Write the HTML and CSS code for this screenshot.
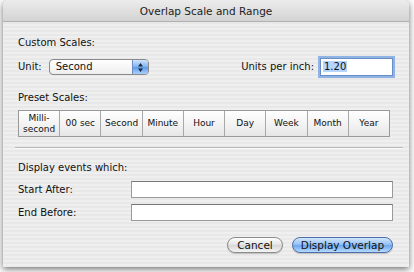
FILE: index.html
```html
<!DOCTYPE html>
<html>
<head>
	<title>Overlap Scale and Range</title>
	<link rel="stylesheet" href="styles.css">
</head>
<body>
	<div class="backdrop">
		<div class="sheet">
			<div class="titlebar">Overlap Scale and Range</div>
			<div class="content">
				<div class="label section">Custom Scales:</div>
				<div class="unit-row">
					<span class="label">Unit:</span>
					<div class="popup">
						<span class="popup-text">Second</span>
						<span class="popup-arrows">
							<svg width="7" height="11" viewBox="0 0 7 11"><path d="M3.5 1 L6 4.5 L1 4.5 Z M3.5 10 L6 6.5 L1 6.5 Z" fill="#1a2a44"/></svg>
						</span>
					</div>
					<span class="spacer"></span>
					<span class="label">Units per inch:</span>
					<div class="text-field focused"><span class="selected">1.20</span></div>
				</div>
				<div class="label section preset-title">Preset Scales:</div>
				<div class="segments">
					<div class="seg two-line">Milli-<br>second</div>
					<div class="seg">00 sec</div>
					<div class="seg">Second</div>
					<div class="seg">Minute</div>
					<div class="seg">Hour</div>
					<div class="seg">Day</div>
					<div class="seg">Week</div>
					<div class="seg">Month</div>
					<div class="seg">Year</div>
				</div>
				<div class="separator"></div>
				<div class="label section events-title">Display events which:</div>
				<div class="field-row">
					<span class="label">Start After:</span>
					<div class="text-field wide"></div>
				</div>
				<div class="field-row">
					<span class="label">End Before:</span>
					<div class="text-field wide"></div>
				</div>
				<div class="buttons">
					<div class="btn">Cancel</div>
					<div class="btn default">Display Overlap</div>
				</div>
			</div>
		</div>
	</div>
</body>
</html>
```

FILE: styles.css
```css
body {
	margin: 0;
	padding: 0;
	background-color: #f4f4f4;
	font-family: "DejaVu Sans", sans-serif;
	font-size: 10px;
	color: #111;
}
.backdrop {
	width: 414px;
	height: 272px;
	padding-left: 3px;
	box-sizing: border-box;
	background-color: #fafafa;
	overflow: hidden;
}
.sheet {
	width: 406px;
	height: 267px;
	border-radius: 6px 6px 0 0;
	background: repeating-linear-gradient(#efefef 0, #efefef 2px, #e8e8e8 2px, #e8e8e8 4px);
	box-shadow: 0 2px 6px rgba(0, 0, 0, 0.55);
	overflow: hidden;
}
.titlebar {
	height: 22px;
	line-height: 22px;
	text-align: center;
	font-size: 10.5px;
	color: #222;
	background: linear-gradient(#ececec, #d3d3d3);
	border-bottom: 1px solid #b0b0b0;
	box-sizing: border-box;
}
.content {
	padding: 14px 16px 0 15px;
}
.label {
	line-height: 14px;
}
.unit-row {
	display: flex;
	align-items: center;
	margin-top: 8px;
	height: 18px;
}
.popup {
	display: flex;
	margin-left: 7px;
	width: 100px;
	height: 16px;
	border: 1px solid #8a8a8a;
	border-radius: 4px;
	background: linear-gradient(#ffffff, #eeeeee);
	box-sizing: border-box;
	overflow: hidden;
}
.popup-text {
	flex: 1;
	padding-left: 6px;
	line-height: 14px;
}
.popup-arrows {
	width: 15px;
	display: flex;
	align-items: center;
	justify-content: center;
	background: linear-gradient(#cfe3fb, #7fb2ef 50%, #5c9ae8 51%, #a9d0fa);
	border-left: 1px solid #6d8fc0;
}
.spacer {
	flex: 1;
}
.text-field {
	height: 18px;
	background: #fff;
	border: 1px solid #9a9a9a;
	border-top-color: #777;
	box-sizing: border-box;
	line-height: 16px;
}
.text-field.focused {
	width: 73px;
	margin-left: 6px;
	padding-left: 2px;
	box-shadow: 0 0 0 2px #8fb3e4;
	border-color: #6a8fc8;
}
.selected {
	background: #b5d5ff;
	padding: 0 1px;
}
.preset-title {
	margin-top: 15px;
}
.segments {
	display: flex;
	margin-top: 5px;
	width: 372px;
	height: 27px;
	border: 1px solid #999;
	box-sizing: border-box;
	background: #fff;
}
.seg {
	flex: 1;
	display: flex;
	align-items: center;
	justify-content: center;
	text-align: center;
	font-size: 9px;
	line-height: 11px;
	background: linear-gradient(#ffffff, #f1f1f1 60%, #e6e6e6);
	border-left: 1px solid #a8a8a8;
}
.seg:first-child {
	border-left: none;
}
.separator {
	margin: 10px 0 0 -3px;
	width: 388px;
	height: 1px;
	background: #b8b8b8;
	border-bottom: 1px solid #fafafa;
}
.events-title {
	margin-top: 12px;
}
.field-row {
	display: flex;
	align-items: center;
	margin-top: 6px;
	height: 17px;
}
.field-row .label {
	width: 113px;
}
.text-field.wide {
	flex: 1;
	height: 17px;
}
.buttons {
	display: flex;
	justify-content: flex-end;
	gap: 9px;
	margin-top: 16px;
}
.btn {
	height: 16px;
	line-height: 14px;
	border-radius: 8px;
	border: 1px solid #8c8c8c;
	box-sizing: border-box;
	background: linear-gradient(#fdfdfd, #e4e4e4 50%, #d6d6d6 51%, #f4f4f4);
	box-shadow: 0 1px 1px rgba(0, 0, 0, 0.2);
	width: 56px;
	text-align: center;
	font-size: 10.5px;
}
.btn.default {
	width: 101px;
	border-color: #4d6ea8;
	background: linear-gradient(#d2e6fc, #8fbef3 50%, #6aa5ec 51%, #b5dafd);
}
```
